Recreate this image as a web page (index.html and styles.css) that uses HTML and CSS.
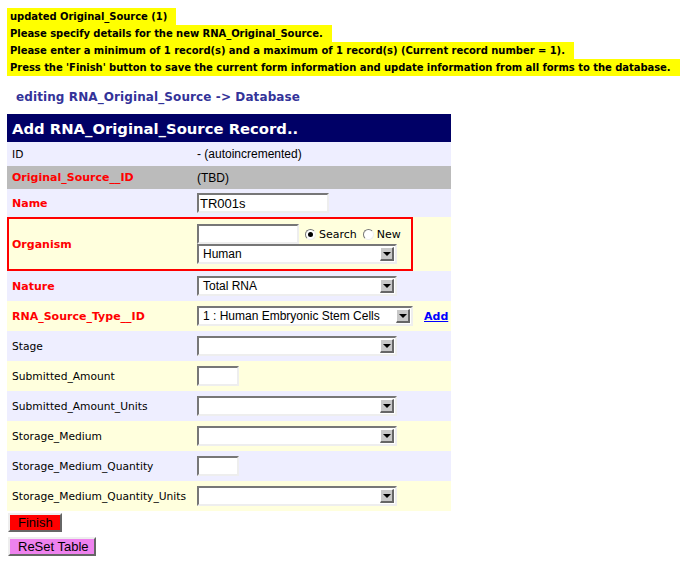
FILE: index.html
```html
<!DOCTYPE html>
<html>
<head>
<meta charset="utf-8">
<link rel="stylesheet" href="styles.css">
</head>
<body>
<div class="messages">
  <div class="msg">updated Original_Source (1)</div>
  <div class="msg">Please specify details for the new RNA_Original_Source.</div>
  <div class="msg">Please enter a minimum of 1 record(s) and a maximum of 1 record(s) (Current record number = 1).</div>
  <div class="msg">Press the 'Finish' button to save the current form information and update information from all forms to the database.</div>
</div>
<h2 class="editing">editing RNA_Original_Source -&gt; Database</h2>
<table class="form">
  <tr class="head"><th colspan="3">Add RNA_Original_Source Record..</th></tr>
  <tr class="lav r24"><td class="lbl">ID</td><td class="val">- (autoincremented)</td><td></td></tr>
  <tr class="gray r23"><td class="lbl req">Original_Source__ID</td><td class="val">(TBD)</td><td></td></tr>
  <tr class="lav r28"><td class="lbl req">Name</td><td class="val"><span class="txt w131">TR001s</span></td><td></td></tr>
  <tr class="yel r54 hl"><td class="lbl req hl-l">Organism</td><td class="val hl-r">
    <div class="org-top"><span class="txt w101"></span><span class="radio on"></span><span class="rlabel">Search</span><span class="radio"></span><span class="rlabel">New</span></div>
    <div class="sel w200"><span class="stext">Human</span><span class="arrow"></span></div>
  </td><td></td></tr>
  <tr class="lav r30"><td class="lbl req">Nature</td><td class="val"><div class="sel w200"><span class="stext">Total RNA</span><span class="arrow"></span></div></td><td></td></tr>
  <tr class="yel r30"><td class="lbl req">RNA_Source_Type__ID</td><td class="val"><div class="sel w216"><span class="stext">1 : Human Embryonic Stem Cells</span><span class="arrow"></span></div></td><td class="add"><a href="#">Add</a></td></tr>
  <tr class="lav r30"><td class="lbl">Stage</td><td class="val"><div class="sel w200"><span class="stext"></span><span class="arrow"></span></div></td><td></td></tr>
  <tr class="yel r30"><td class="lbl">Submitted_Amount</td><td class="val"><span class="txt w42"></span></td><td></td></tr>
  <tr class="lav r30"><td class="lbl">Submitted_Amount_Units</td><td class="val"><div class="sel w200"><span class="stext"></span><span class="arrow"></span></div></td><td></td></tr>
  <tr class="yel r30"><td class="lbl">Storage_Medium</td><td class="val"><div class="sel w200"><span class="stext"></span><span class="arrow"></span></div></td><td></td></tr>
  <tr class="lav r30"><td class="lbl">Storage_Medium_Quantity</td><td class="val"><span class="txt w42"></span></td><td></td></tr>
  <tr class="yel r30"><td class="lbl">Storage_Medium_Quantity_Units</td><td class="val"><div class="sel w200"><span class="stext"></span><span class="arrow"></span></div></td><td></td></tr>
</table>
<div class="buttons">
  <button class="btn finish">Finish</button>
  <button class="btn reset">ReSet Table</button>
</div>
</body>
</html>
```

FILE: styles.css
```css
html, body { margin: 0; padding: 0; background: #fff; }
body { padding: 8px 7px; font-family: "DejaVu Sans", sans-serif; }

.messages { display: flex; flex-direction: column; align-items: flex-start; }
.msg {
  background: #ffff00;
  color: #000;
  font: bold 10px "DejaVu Sans", sans-serif;
  letter-spacing: -0.05px;
  height: 17px;
  line-height: 17px;
  padding: 0 9px 0 3px;
  white-space: nowrap;
}

.editing {
  margin: 11px 0 0 9px;
  font: bold 12px "DejaVu Sans", sans-serif;
  color: #333399;
  height: 20px;
  line-height: 20px;
  letter-spacing: 0.1px;
}

.form {
  margin-top: 7px;
  border-collapse: collapse;
  width: 444px;
}
.form td, .form th { padding: 0; }
.head th {
  background: #000066;
  color: #fff;
  height: 28px;
  text-align: left;
  padding-left: 5px;
  font: bold 14.8px "DejaVu Sans", sans-serif;
}
.lav { background: #eeeeff; }
.yel { background: #ffffdd; }
.gray { background: #bbbbbb; }
.r23 td { height: 23px; }
.r24 td { height: 24px; }
.r28 td { height: 28px; }
.r30 td { height: 30px; }
.r54 td { height: 54px; }

.lbl {
  width: 185px;
  padding-left: 5px !important;
  font: 10.7px "DejaVu Sans", sans-serif;
  color: #000;
  vertical-align: middle;
}
.lbl.req { color: #ff0000; font-weight: bold; font-size: 11px; }
.val {
  width: 216px;
  font: 12px "Liberation Sans", sans-serif;
  vertical-align: middle;
}
.add { vertical-align: middle; padding-left: 11px !important; font: bold 11px "DejaVu Sans", sans-serif; }
.add a { color: #0000ff; text-decoration: underline; }

.hl-l { box-shadow: inset 2px 0 0 #ff0000, inset 0 2px 0 #ff0000, inset 0 -2px 0 #ff0000; }
.hl-r { box-shadow: inset -2px 0 0 #ff0000, inset 0 2px 0 #ff0000, inset 0 -2px 0 #ff0000; }

.txt {
  display: inline-flex;
  align-items: center;
  box-sizing: border-box;
  height: 20px;
  background: #fff;
  border-top: 2px solid #777;
  border-left: 2px solid #777;
  border-bottom: 2px solid #eee;
  border-right: 2px solid #eee;
  font: 13px "Liberation Sans", sans-serif;
  padding-left: 1px;
  vertical-align: middle;
}
.w131 { width: 132px; }
.w101 { width: 102px; }
.w42 { width: 42px; }

.org-top { display: flex; align-items: center; height: 20px; }
.radio {
  width: 11px; height: 11px;
  border-radius: 50%;
  box-sizing: border-box;
  border: 1px solid #777;
  border-right-color: #eee; border-bottom-color: #eee;
  background: #fff;
  margin: 0 3px 0 6px;
  position: relative;
}
.radio.on::after {
  content: ""; position: absolute; left: 2px; top: 2px;
  width: 5px; height: 5px; border-radius: 50%; background: #000;
}
.rlabel { font: 11px "DejaVu Sans", sans-serif; }

.sel {
  display: flex;
  align-items: center;
  box-sizing: border-box;
  height: 20px;
  background: #fff;
  border-top: 2px solid #777;
  border-left: 2px solid #777;
  border-bottom: 2px solid #eee;
  border-right: 2px solid #eee;
}
.w200 { width: 200px; }
.w216 { width: 216px; }
.stext { flex: 1; padding-left: 4px; font: 12px "Liberation Sans", sans-serif; white-space: nowrap; overflow: hidden; }
.arrow {
  width: 14px; height: 14px;
  box-sizing: border-box;
  background: #c8c8c8;
  border-top: 1px solid #fff; border-left: 1px solid #fff;
  border-right: 2px solid #666; border-bottom: 2px solid #666;
  margin-right: 1px;
  display: flex; align-items: center; justify-content: center;
}
.arrow::after {
  content: ""; width: 0; height: 0;
  border-left: 4px solid transparent; border-right: 4px solid transparent;
  border-top: 4px solid #000;
}

.buttons { display: flex; flex-direction: column; align-items: flex-start; gap: 5px; margin-top: 2px; padding-left: 1px; }
.btn {
  box-sizing: border-box;
  height: 19px;
  padding: 0 8px;
  font: 13px "Liberation Sans", sans-serif;
  color: #000;
  white-space: nowrap;
  border-top: 2px solid #eee; border-left: 2px solid #eee;
  border-right: 2px solid #666; border-bottom: 2px solid #666;
  line-height: 14px;
}
.finish { background: #ff0000; width: 54px; }
.reset { background: #ee82ee; width: 88px; }
```
